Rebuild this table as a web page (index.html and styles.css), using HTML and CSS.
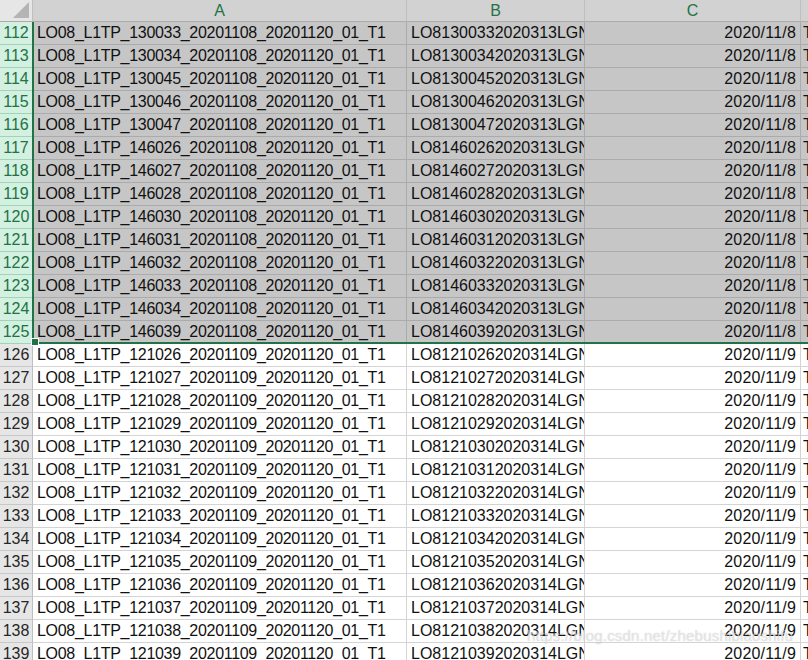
FILE: index.html
```html
<!DOCTYPE html>
<html>
<head>
<meta charset="utf-8">
<link rel="stylesheet" href="styles.css">
</head>
<body>
<div class="sheet">
  <div class="grid">
    <div class="corner"><span class="tri"></span></div>
    <div class="colhead">A</div>
    <div class="colhead">B</div>
    <div class="colhead">C</div>
    <div class="colhead last"></div>

    <div class="rh sel">112</div><div class="c a sel">LO08_L1TP_130033_20201108_20201120_01_T1</div><div class="c b sel">LO81300332020313LGN00</div><div class="c d sel">2020/11/8</div><div class="c e sel">T1</div>
    <div class="rh sel">113</div><div class="c a sel">LO08_L1TP_130034_20201108_20201120_01_T1</div><div class="c b sel">LO81300342020313LGN00</div><div class="c d sel">2020/11/8</div><div class="c e sel">T1</div>
    <div class="rh sel">114</div><div class="c a sel">LO08_L1TP_130045_20201108_20201120_01_T1</div><div class="c b sel">LO81300452020313LGN00</div><div class="c d sel">2020/11/8</div><div class="c e sel">T1</div>
    <div class="rh sel">115</div><div class="c a sel">LO08_L1TP_130046_20201108_20201120_01_T1</div><div class="c b sel">LO81300462020313LGN00</div><div class="c d sel">2020/11/8</div><div class="c e sel">T1</div>
    <div class="rh sel">116</div><div class="c a sel">LO08_L1TP_130047_20201108_20201120_01_T1</div><div class="c b sel">LO81300472020313LGN00</div><div class="c d sel">2020/11/8</div><div class="c e sel">T1</div>
    <div class="rh sel">117</div><div class="c a sel">LO08_L1TP_146026_20201108_20201120_01_T1</div><div class="c b sel">LO81460262020313LGN00</div><div class="c d sel">2020/11/8</div><div class="c e sel">T1</div>
    <div class="rh sel">118</div><div class="c a sel">LO08_L1TP_146027_20201108_20201120_01_T1</div><div class="c b sel">LO81460272020313LGN00</div><div class="c d sel">2020/11/8</div><div class="c e sel">T1</div>
    <div class="rh sel">119</div><div class="c a sel">LO08_L1TP_146028_20201108_20201120_01_T1</div><div class="c b sel">LO81460282020313LGN00</div><div class="c d sel">2020/11/8</div><div class="c e sel">T1</div>
    <div class="rh sel">120</div><div class="c a sel">LO08_L1TP_146030_20201108_20201120_01_T1</div><div class="c b sel">LO81460302020313LGN00</div><div class="c d sel">2020/11/8</div><div class="c e sel">T1</div>
    <div class="rh sel">121</div><div class="c a sel">LO08_L1TP_146031_20201108_20201120_01_T1</div><div class="c b sel">LO81460312020313LGN00</div><div class="c d sel">2020/11/8</div><div class="c e sel">T1</div>
    <div class="rh sel">122</div><div class="c a sel">LO08_L1TP_146032_20201108_20201120_01_T1</div><div class="c b sel">LO81460322020313LGN00</div><div class="c d sel">2020/11/8</div><div class="c e sel">T1</div>
    <div class="rh sel">123</div><div class="c a sel">LO08_L1TP_146033_20201108_20201120_01_T1</div><div class="c b sel">LO81460332020313LGN00</div><div class="c d sel">2020/11/8</div><div class="c e sel">T1</div>
    <div class="rh sel">124</div><div class="c a sel">LO08_L1TP_146034_20201108_20201120_01_T1</div><div class="c b sel">LO81460342020313LGN00</div><div class="c d sel">2020/11/8</div><div class="c e sel">T1</div>
    <div class="rh sel">125</div><div class="c a sel">LO08_L1TP_146039_20201108_20201120_01_T1</div><div class="c b sel">LO81460392020313LGN00</div><div class="c d sel">2020/11/8</div><div class="c e sel">T1</div>

    <div class="rh">126</div><div class="c a">LO08_L1TP_121026_20201109_20201120_01_T1</div><div class="c b">LO81210262020314LGN00</div><div class="c d">2020/11/9</div><div class="c e">T1</div>
    <div class="rh">127</div><div class="c a">LO08_L1TP_121027_20201109_20201120_01_T1</div><div class="c b">LO81210272020314LGN00</div><div class="c d">2020/11/9</div><div class="c e">T1</div>
    <div class="rh">128</div><div class="c a">LO08_L1TP_121028_20201109_20201120_01_T1</div><div class="c b">LO81210282020314LGN00</div><div class="c d">2020/11/9</div><div class="c e">T1</div>
    <div class="rh">129</div><div class="c a">LO08_L1TP_121029_20201109_20201120_01_T1</div><div class="c b">LO81210292020314LGN00</div><div class="c d">2020/11/9</div><div class="c e">T1</div>
    <div class="rh">130</div><div class="c a">LO08_L1TP_121030_20201109_20201120_01_T1</div><div class="c b">LO81210302020314LGN00</div><div class="c d">2020/11/9</div><div class="c e">T1</div>
    <div class="rh">131</div><div class="c a">LO08_L1TP_121031_20201109_20201120_01_T1</div><div class="c b">LO81210312020314LGN00</div><div class="c d">2020/11/9</div><div class="c e">T1</div>
    <div class="rh">132</div><div class="c a">LO08_L1TP_121032_20201109_20201120_01_T1</div><div class="c b">LO81210322020314LGN00</div><div class="c d">2020/11/9</div><div class="c e">T1</div>
    <div class="rh">133</div><div class="c a">LO08_L1TP_121033_20201109_20201120_01_T1</div><div class="c b">LO81210332020314LGN00</div><div class="c d">2020/11/9</div><div class="c e">T1</div>
    <div class="rh">134</div><div class="c a">LO08_L1TP_121034_20201109_20201120_01_T1</div><div class="c b">LO81210342020314LGN00</div><div class="c d">2020/11/9</div><div class="c e">T1</div>
    <div class="rh">135</div><div class="c a">LO08_L1TP_121035_20201109_20201120_01_T1</div><div class="c b">LO81210352020314LGN00</div><div class="c d">2020/11/9</div><div class="c e">T1</div>
    <div class="rh">136</div><div class="c a">LO08_L1TP_121036_20201109_20201120_01_T1</div><div class="c b">LO81210362020314LGN00</div><div class="c d">2020/11/9</div><div class="c e">T1</div>
    <div class="rh">137</div><div class="c a">LO08_L1TP_121037_20201109_20201120_01_T1</div><div class="c b">LO81210372020314LGN00</div><div class="c d">2020/11/9</div><div class="c e">T1</div>
    <div class="rh">138</div><div class="c a">LO08_L1TP_121038_20201109_20201120_01_T1</div><div class="c b">LO81210382020314LGN00</div><div class="c d">2020/11/9</div><div class="c e">T1</div>
    <div class="rh">139</div><div class="c a">LO08_L1TP_121039_20201109_20201120_01_T1</div><div class="c b">LO81210392020314LGN00</div><div class="c d">2020/11/9</div><div class="c e">T1</div>
  </div>
  <div class="selection"><span class="handle"></span></div>
  <div class="watermark">https://blog.csdn.net/zhebushibiaoshifu</div>
</div>
</body>
</html>
```

FILE: styles.css
```css
html, body {
  margin: 0;
  padding: 0;
  background: #fff;
  overflow: hidden;
}
.sheet {
  position: relative;
  width: 808px;
  height: 660px;
  overflow: hidden;
  font-family: "Liberation Sans", Arial, sans-serif;
  font-size: 16px;
  letter-spacing: -0.3px;
  color: #111;
}
.grid {
  display: grid;
  grid-template-columns: 33px 374px 178px 216px 60px;
  grid-template-rows: 22px;
  grid-auto-rows: 23px;
}
.grid > div {
  box-sizing: border-box;
  border-right: 1px solid #d4d4d4;
  border-bottom: 1px solid #d4d4d4;
  white-space: nowrap;
  overflow: hidden;
  line-height: 22px;
}
.corner {
  position: relative;
  background: #e6e6e6;
  border-right-color: #bfbfbf !important;
  border-bottom-color: #ababab !important;
}
.tri {
  position: absolute;
  right: 3px;
  bottom: 3px;
  width: 0;
  height: 0;
  border-left: 16px solid transparent;
  border-bottom: 16px solid #b4b4b4;
}
.colhead {
  background: #d2d2d2;
  text-align: center;
  color: #217346;
  font-size: 16px;
  line-height: 21px !important;
  border-right-color: #bfbfbf !important;
  border-bottom-color: #ababab !important;
}
.rh {
  background: #e6e6e6;
  text-align: center;
  color: #262626;
  letter-spacing: 0;
  border-right-color: #bfbfbf !important;
  border-bottom-color: #c8c8c8 !important;
}
.rh.sel {
  background: #d3f0e0;
  color: #217346;
  border-bottom-color: #9fd5b7 !important;
}
.c.sel {
  background: #c6c6c6;
  border-color: #ababab !important;
}
.a, .b {
  padding-left: 4px;
}
.b {
  text-overflow: clip;
  letter-spacing: 0;
}
.d {
  text-align: right;
  padding-right: 4px;
  letter-spacing: 0.2px;
}
.e {
  padding-left: 2px;
  border-right: none !important;
}
.selection {
  position: absolute;
  left: 32px;
  top: 22px;
  width: 780px;
  height: 320px;
  border-left: 2px solid #217346;
  border-bottom: 2px solid #217346;
  box-sizing: content-box;
  pointer-events: none;
}
.handle {
  position: absolute;
  left: -3px;
  bottom: -4px;
  width: 6px;
  height: 6px;
  background: #217346;
  border: 1px solid #fff;
}
.watermark {
  position: absolute;
  left: 527px;
  top: 627px;
  font-family: "Liberation Sans", Arial, sans-serif;
  font-size: 15px;
  letter-spacing: 0.2px;
  color: rgba(255, 255, 255, 0.45);
  text-shadow: 0 0 1px rgba(140, 140, 140, 0.5);
}
```
